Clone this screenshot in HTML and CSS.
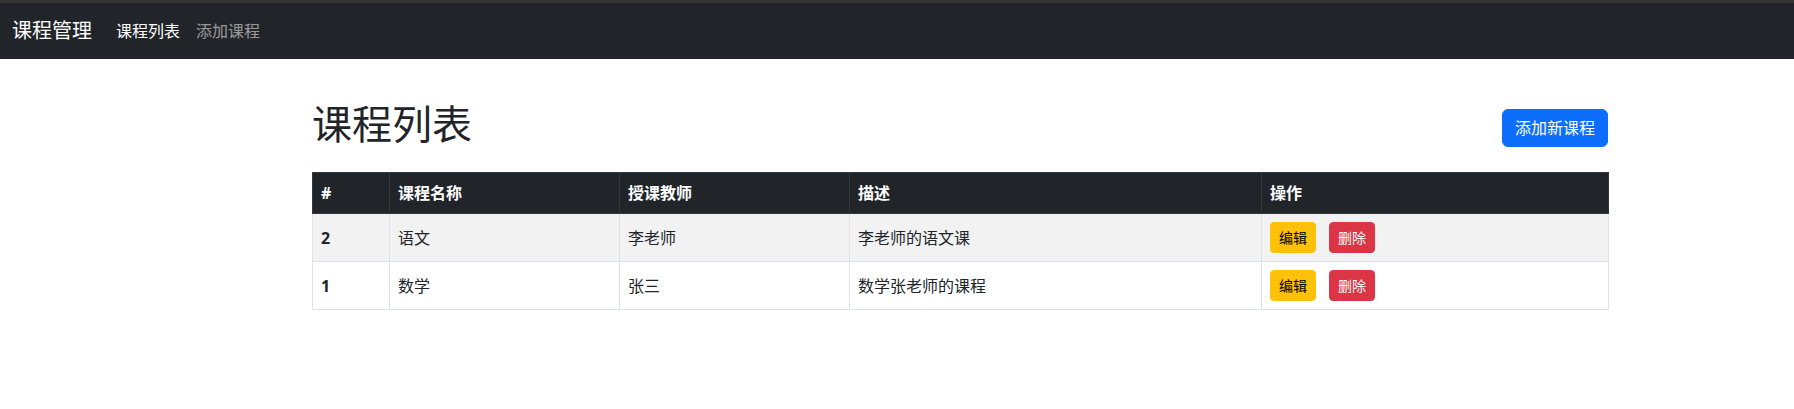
FILE: index.html
```html
<!DOCTYPE html>
<html lang="zh-CN">
<head>
<meta charset="utf-8">
<title>课程管理</title>
<link rel="stylesheet" href="styles.css">
</head>
<body>
<nav class="navbar">
  <a class="brand" href="#">课程管理</a>
  <ul class="nav-links">
    <li><a class="nav-link active" href="#">课程列表</a></li>
    <li><a class="nav-link" href="#">添加课程</a></li>
  </ul>
</nav>
<main class="container">
  <div class="page-head">
    <h1 class="title">课程列表</h1>
    <a class="btn btn-primary" href="#">添加新课程</a>
  </div>
  <table class="table">
    <colgroup>
      <col class="c-id"><col class="c-name"><col class="c-teacher"><col class="c-desc"><col class="c-ops">
    </colgroup>
    <thead>
      <tr><th>#</th><th>课程名称</th><th>授课教师</th><th>描述</th><th>操作</th></tr>
    </thead>
    <tbody>
      <tr class="striped">
        <td class="num">2</td><td>语文</td><td>李老师</td><td>李老师的语文课</td>
        <td><div class="ops"><a class="btn-sm btn-warning" href="#">编辑</a><a class="btn-sm btn-danger" href="#">删除</a></div></td>
      </tr>
      <tr>
        <td class="num">1</td><td>数学</td><td>张三</td><td>数学张老师的课程</td>
        <td><div class="ops"><a class="btn-sm btn-warning" href="#">编辑</a><a class="btn-sm btn-danger" href="#">删除</a></div></td>
      </tr>
    </tbody>
  </table>
</main>
</body>
</html>
```

FILE: styles.css
```css
* { box-sizing: border-box; }
body {
  margin: 0;
  font-family: "Noto Sans", "Noto Sans CJK SC", sans-serif;
  font-size: 16px;
  line-height: 24px;
  color: #212529;
  background: #fff;
}
a { text-decoration: none; }

.navbar {
  display: flex;
  align-items: center;
  height: 59px;
  border-top: 3px solid #333333;
  background: #212529;
  padding: 0 12px;
}
.brand {
  font-size: 20px;
  line-height: 30px;
  color: #fff;
  margin-right: 16px;
}
.nav-links {
  display: flex;
  list-style: none;
  margin: 0;
  padding: 0;
}
.nav-link {
  display: block;
  padding: 8px;
  color: rgba(255,255,255,0.55);
}
.nav-link.active { color: #fff; }

.container {
  width: 1320px;
  margin-left: 300px;
  padding: 41px 12px 0;
}
.page-head {
  display: flex;
  justify-content: space-between;
  align-items: center;
  margin-bottom: 16px;
}
.title {
  margin: 0 0 8px;
  font-size: 40px;
  line-height: 48px;
  font-weight: 400;
}
.btn {
  display: inline-block;
  padding: 6px 12px;
  border: 1px solid transparent;
  border-radius: 6px;
  font-size: 16px;
  line-height: 24px;
}
.btn-primary { background: #0d6efd; border-color: #0d6efd; color: #fff; }

.table {
  width: 1296px;
  table-layout: fixed;
  border-collapse: collapse;
  margin-bottom: 16px;
}
.c-id { width: 77px; }
.c-name { width: 230px; }
.c-teacher { width: 230px; }
.c-desc { width: 412px; }
.c-ops { width: 347px; }
.table th, .table td {
  text-align: left;
  padding: 8px;
  border: 1px solid #dee2e6;
  vertical-align: middle;
}
.table thead th {
  background: #212529;
  color: #fff;
  font-weight: 700;
  border-color: #32383e;
}
.table tbody tr.striped td { background: #f2f2f2; }
.table td.num { font-weight: 700; }
.ops { display: flex; gap: 13px; }
.btn-sm {
  display: inline-block;
  padding: 4px 8px;
  border: 1px solid transparent;
  border-radius: 4px;
  font-size: 14px;
  line-height: 21px;
}
.btn-warning { background: #ffc107; border-color: #ffc107; color: #000; }
.btn-danger { background: #dc3545; border-color: #dc3545; color: #fff; }
```
